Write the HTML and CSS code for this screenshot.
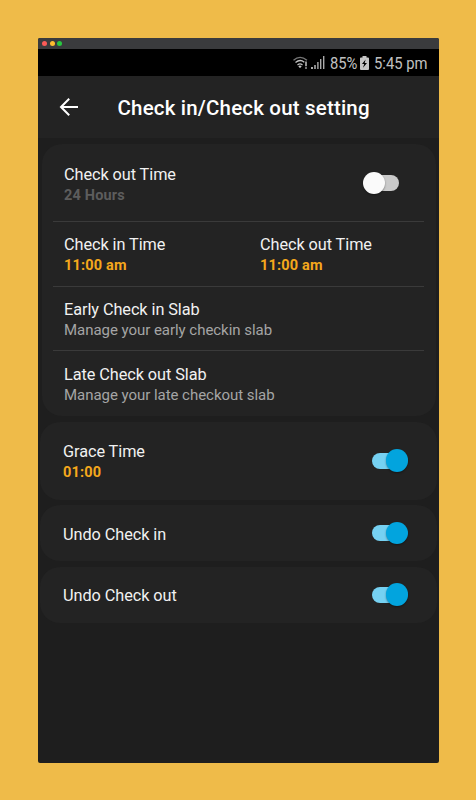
FILE: index.html
```html
<!DOCTYPE html>
<html lang="en">
<head>
<meta charset="utf-8">
<title>Check in/Check out setting</title>
<link rel="stylesheet" href="styles.css">
</head>
<body>
<div class="window">
  <div class="titlebar"><i class="dot red"></i><i class="dot yellow"></i><i class="dot green"></i></div>
  <div class="status">
    <svg class="wifi" width="15" height="14" viewBox="0 0 15 14" fill="none" stroke="#c4c4c4" stroke-width="1.3">
      <path d="M.5 4.2Q7 -1.3 14 4.2" stroke="#777"/><path d="M2.5 6.6Q7 2.7 11.3 6.2M4.5 9Q7 6.9 9.5 9"/><path d="M5.3 10.2Q7 9 8.7 10.2L7 12.2z" fill="#c4c4c4" stroke="none"/><path d="M13 5.5v4.7M13 11.2v1.5" stroke-width="1.5"/>
    </svg>
    <svg class="signal" width="14" height="14" viewBox="0 0 14 14" fill="#aaa"><path d="M0 11h2v2H0zM3.2 9h1.6v4H3.2zM6.2 6h1.400v7H6.200zM9 3h1.400v10H9zM12 0h1.400v13H12z"/></svg>
    <span class="percent"><span class="narrow">85%</span></span>
    <svg class="battery" width="9" height="14" viewBox="0 0 9 14"><path d="M2.5 0h4v1.5H8q1 0 1 1V13q0 1-1 1H1q-1 0-1-1V2.500q0-1 1-1h1.500z" fill="#c6c6c6"/><path d="M5.600 3.500 2 8h2.200L3 11.700 7 7H4.700z" fill="#000"/></svg>
    <span class="clock"><span class="narrow">5:45 pm</span></span>
  </div>
  <header class="header">
    <svg class="back" width="20" height="20" viewBox="0 0 20 20" fill="none" stroke="#fff" stroke-width="2"><path d="M19 10H2M10.200 1.800 2 10l8.200 8.200"/></svg>
    <h1>Check in/Check out setting</h1>
  </header>
  <main>
    <section class="card times">
      <div class="row first">
        <div><div class="label">Check out Time</div><div class="value muted">24 Hours</div></div>
        <span class="switch off"></span>
      </div>
      <div class="row pair">
        <div><div class="label">Check in Time</div><div class="value">11:00 am</div></div>
        <div><div class="label">Check out Time</div><div class="value">11:00 am</div></div>
      </div>
      <div class="row"><div><div class="label">Early Check in Slab</div><div class="note">Manage your early checkin slab</div></div></div>
      <div class="row last"><div><div class="label">Late Check out Slab</div><div class="note">Manage your late checkout slab</div></div></div>
    </section>
    <section class="card option grace">
      <div><div class="label">Grace Time</div><div class="value">01:00</div></div>
      <span class="switch"></span>
    </section>
    <section class="card option"><div class="label">Undo Check in</div><span class="switch"></span></section>
    <section class="card option"><div class="label">Undo Check out</div><span class="switch"></span></section>
  </main>
</div>
</body>
</html>
```
FILE: styles.css
```css
* { box-sizing: border-box; }
body { margin: 0; height: 800px; padding: 37.500px; background: #efbb49; font-family: Roboto, sans-serif; overflow: hidden; }
.window { width: 401px; height: 725px; background: #1e1e1e; border-radius: 2px; overflow: hidden; }
.titlebar { height: 11.500px; background: #3a3b3d; display: flex; align-items: center; gap: 2.500px; padding-left: 4.500px; }
.dot { width: 5px; height: 5px; border-radius: 50%; }
.red { background: #fc5b57; }
.yellow { background: #fdbc2f; }
.green { background: #28c840; }
.status { height: 27px; background: #000; color: #c0c0c0; display: flex; align-items: center; padding-left: 255.500px; font-size: 17.200px; }
.status svg { flex: none; }
.signal { margin-left: 3px; }
.percent { width: 28px; margin-left: 5px; }
.battery { margin-left: 2px; }
.clock { width: 54px; margin-left: 5px; }
.narrow { display: block; width: max-content; transform: scaleX(.86); transform-origin: left; line-height: 27px; padding-top: 2px; }
.header { height: 62px; background: #232323; display: flex; align-items: center; padding-left: 21px; }
h1 { margin: 0 0 0 39px; font-size: 20.500px; line-height: 24px; font-weight: 500; color: #fff; white-space: nowrap; letter-spacing: .18px; padding-top: 2px; }
main { padding: 6px 1.500px 0 2px; display: flex; flex-direction: column; gap: 5.500px; }
.card { background: #232323; border-radius: 20px; }
.times { height: 272px; margin: 0 1.500px 0 2px; padding: 0 11.500px; }
.row { height: 64.500px; padding: 12px 11px 0; border-top: 1px solid #3a3a3a; }
.row.first { height: 77px; border: 0; padding: 19.600px 25.500px 0 11px; display: flex; justify-content: space-between; }
.first .switch { margin-top: 7.900px; }
.row.last { padding-top: 12.500px; }
.pair { display: grid; grid-template-columns: 196px 1fr; }
.label { font-size: 16.300px; line-height: 21px; color: #f1f1f1; white-space: nowrap; letter-spacing: -.07px; }
.value { font-size: 14.500px; line-height: 21px; font-weight: 700; color: #f5a81c; letter-spacing: .18px; }
.muted { color: #5d5d5d; }
.note { font-size: 15px; line-height: 21px; color: #a5a5a5; white-space: nowrap; letter-spacing: -.04px; }
.option { height: 56px; display: flex; align-items: center; justify-content: space-between; padding: 0 29px 0 23.500px; }
.option > div { margin-top: 2px; }
.grace { height: 78px; }
.switch { width: 36px; height: 23px; display: flex; align-items: center; justify-content: flex-end; position: relative; }
.switch::before { content: ""; position: absolute; left: 0; top: 3.500px; width: 34px; height: 16px; border-radius: 8px; background: #76d1f2; }
.switch::after { content: ""; position: relative; width: 22.500px; height: 22.500px; border-radius: 50%; background: #02a4de; box-shadow: 0 1px 2px rgba(0,0,0,.4); }
.off { justify-content: flex-start; }
.off::before { left: 2px; background: #cacaca; }
.off::after { background: #fafafa; }
```
